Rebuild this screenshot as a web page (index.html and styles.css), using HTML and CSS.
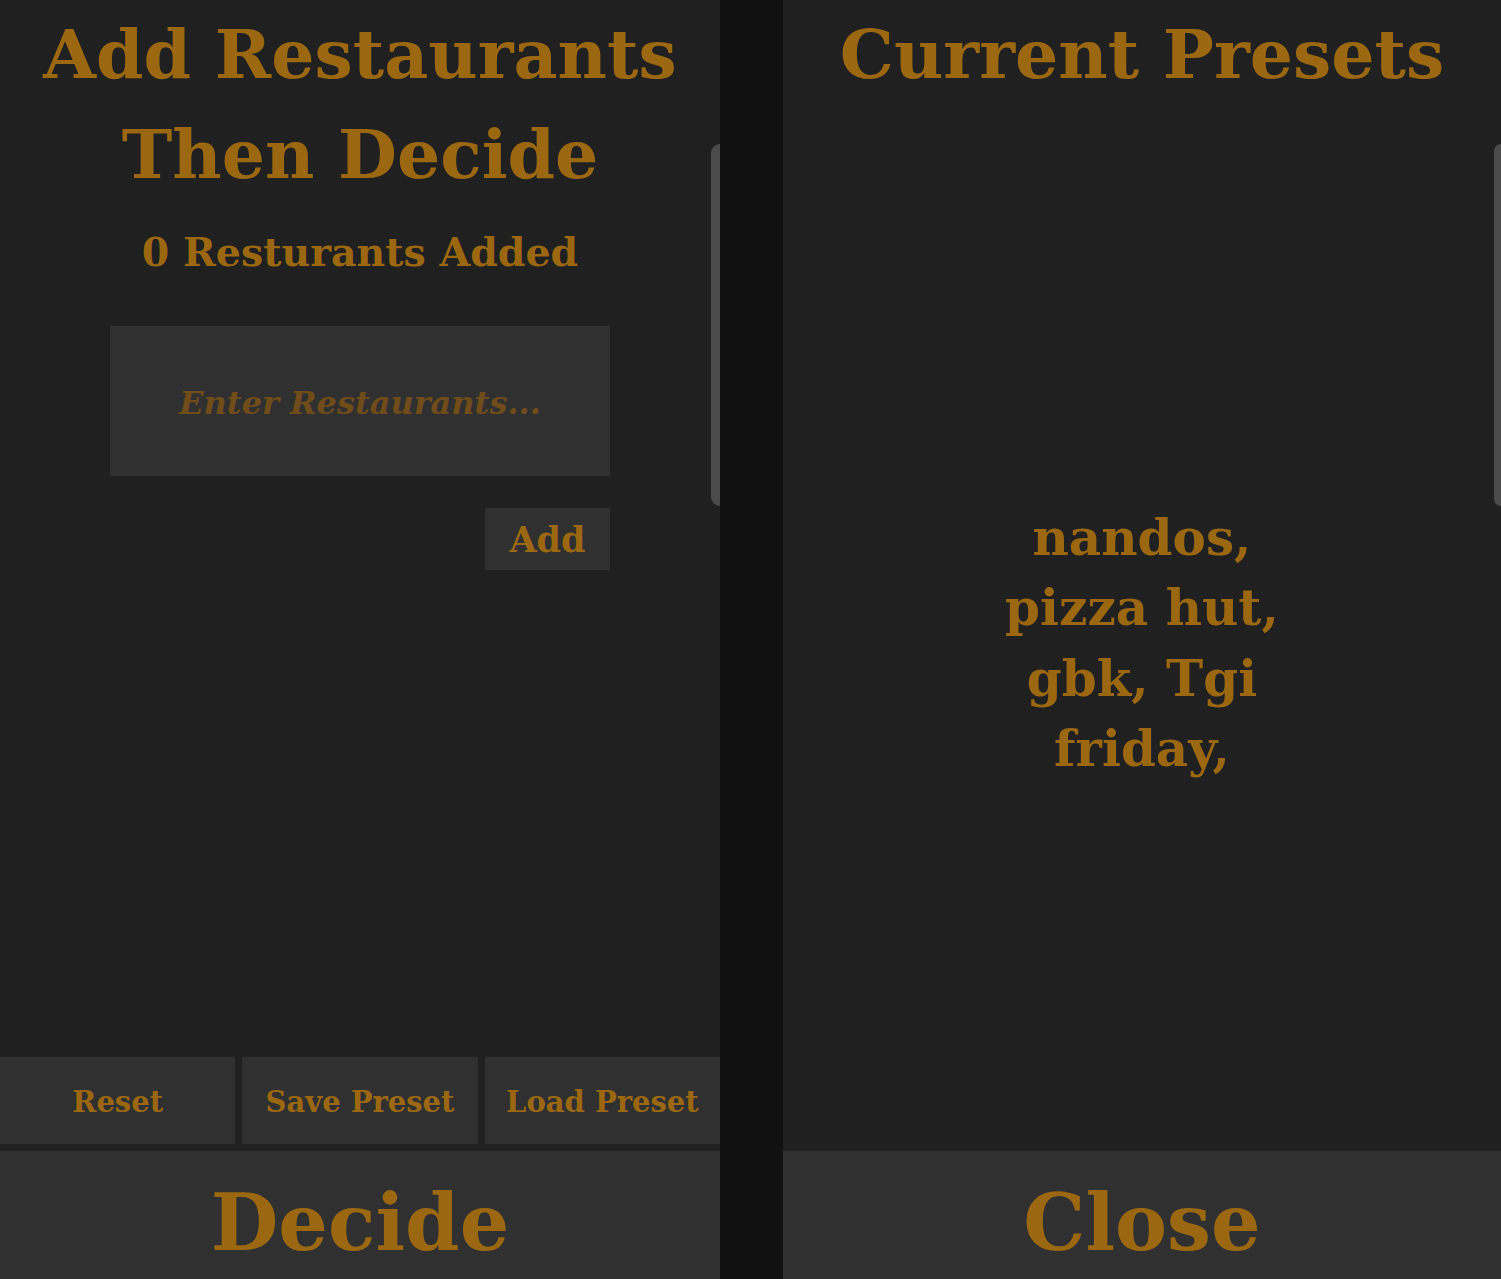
FILE: index.html
```html
<!DOCTYPE html>
<html lang="en">
<head>
    <meta charset="UTF-8">
    <meta name="viewport" content="width=device-width, initial-scale=1.0">
    <title>Restaurant Decider</title>
    <link rel="stylesheet" href="styles.css">
</head>
<body>
    <div class="panel main">
        <h1>Add Restaurants Then Decide</h1>
        <div class="count">0 Resturants Added</div>

        <div class="form">
            <input type="text" class="entry" placeholder="Enter Restaurants...">
            <button class="add">Add</button>
        </div>

        <div class="actions">
            <button>Reset</button>
            <button>Save Preset</button>
            <button>Load Preset</button>
        </div>
        <button class="big">Decide</button>
        <div class="tab"></div>
    </div>

    <div class="panel presets">
        <h1>Current Presets</h1>
        <div class="list">nandos, pizza hut, gbk, Tgi friday,</div>
        <button class="big">Close</button>
        <div class="tab"></div>
    </div>
</body>
</html>
```

FILE: styles.css
```css
body {
    margin: 0;
    background: #111111;
    display: flex;
    justify-content: space-between;
    height: 1279px;
    overflow: hidden;
    font-family: "DejaVu Serif", serif;
    font-weight: bold;
    color: #9b6811;
}
.panel {
    position: relative;
    background: #202020;
    display: flex;
    flex-direction: column;
    align-items: center;
    height: 1279px;
}
.main {
    width: 720px;
}
.presets {
    width: 718px;
}
h1 {
    margin: 4px 0 0 0;
    font-size: 68px;
    line-height: 100px;
    text-align: center;
    width: 680px;
}
.count {
    font-size: 39.5px;
    margin-top: 25px;
}
.form {
    width: 500px;
    margin-top: 51px;
    display: flex;
    flex-direction: column;
    align-items: flex-end;
    gap: 32px;
}
.entry {
    width: 100%;
    height: 150px;
    box-sizing: border-box;
    padding-top: 5px;
    background: #303030;
    border: none;
    outline: none;
    text-align: center;
    font-family: inherit;
    font-weight: bold;
    font-style: italic;
    font-size: 32px;
    color: #9b6811;
}
.entry::placeholder {
    color: #6f4c1a;
}
button {
    background: #303030;
    border: none;
    color: #9b6811;
    font-family: inherit;
    font-weight: bold;
    padding: 0;
    cursor: pointer;
}
.add {
    width: 125px;
    height: 62px;
    font-size: 35px;
}
.actions {
    margin-top: auto;
    width: 100%;
    display: flex;
    gap: 7px;
}
.actions button {
    flex: 1;
    height: 87px;
    padding-top: 3px;
    font-size: 29px;
}
.big {
    width: 100%;
    height: 128px;
    flex-shrink: 0;
    margin-top: 7px;
    padding-top: 14px;
    font-size: 78px;
}
.list {
    flex: 1;
    width: 320px;
    box-sizing: border-box;
    padding-top: 32px;
    display: flex;
    align-items: center;
    text-align: center;
    font-size: 50px;
    line-height: 70.5px;
}
.presets .big {
    margin-top: 0;
}
.tab {
    position: absolute;
    right: 0;
    top: 144px;
    width: 9px;
    height: 362px;
    background: #4b4b4b;
    border-radius: 10px 0 0 10px;
}
.presets .tab {
    width: 7px;
}
```
